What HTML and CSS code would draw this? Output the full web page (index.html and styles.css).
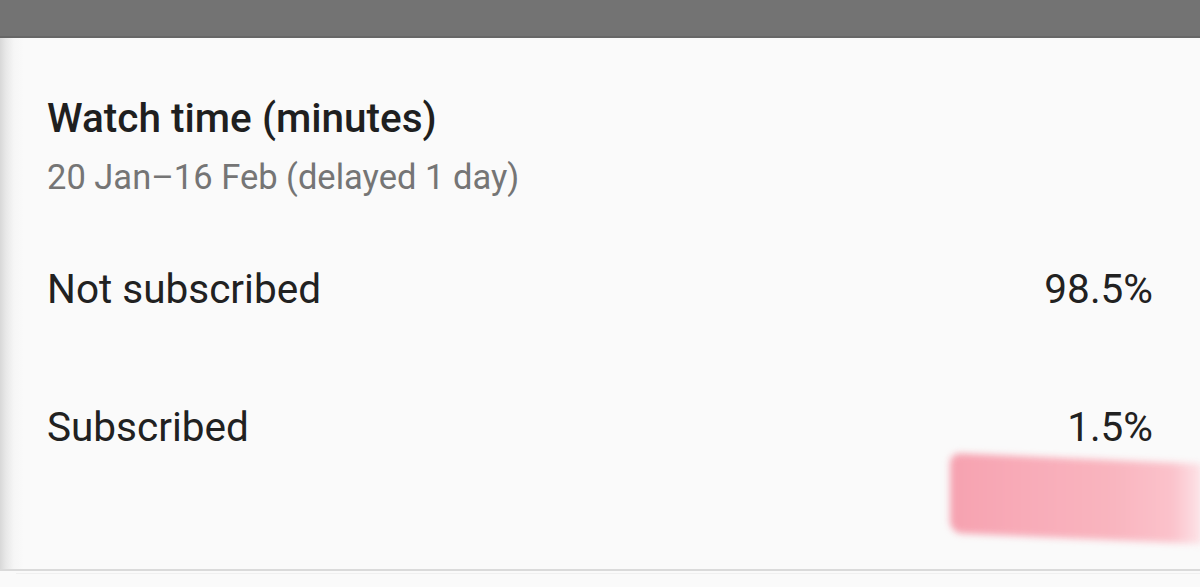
FILE: index.html
```html
<!DOCTYPE html>
<html lang="en">
<head>
<meta charset="utf-8">
<title>Watch time</title>
<link rel="stylesheet" href="styles.css">
</head>
<body>
<div class="topbar"></div>
<main class="card">
  <h1 class="title">Watch time (minutes)</h1>
  <p class="subtitle">20 Jan–16 Feb (delayed 1 day)</p>
  <div class="rows">
    <div class="row"><span class="label">Not subscribed</span><span class="value">98.5%</span></div>
    <div class="row"><span class="label">Subscribed</span><span class="value">1.5%</span></div>
  </div>
  <div class="smudge"></div>
</main>
<div class="below"></div>
</body>
</html>
```
FILE: styles.css
```css
html, body {
  margin: 0;
  padding: 0;
  height: 100%;
}
body {
  background: #fafafa;
  font-family: Roboto, "Liberation Sans", sans-serif;
  color: #212121;
  overflow: hidden;
}
.topbar {
  height: 36px;
  background: #737373;
  border-bottom: 2px solid #676767;
}
.card {
  position: relative;
  overflow: hidden;
  height: 533px;
  box-sizing: border-box;
  padding: 56px 47px 0 47px;
  background: linear-gradient(to right, #d8d8d8 0, #e8e8e8 6px, #f6f6f6 14px, #fafafa 24px);
  border-bottom: 2px solid #dadada;
}
.title {
  margin: 0;
  font-size: 40.5px;
  line-height: 48px;
  font-weight: 500;
  color: #1f1f1f;
}
.subtitle {
  margin: 15px 0 0 0;
  font-size: 34.5px;
  line-height: 40px;
  color: #757575;
}
.rows {
  margin-top: 68px;
  display: flex;
  flex-direction: column;
  gap: 90px;
}
.row {
  display: flex;
  justify-content: space-between;
  align-items: baseline;
  font-size: 40.5px;
  line-height: 48px;
  color: #212121;
}
.smudge {
  position: absolute;
  left: 950px;
  top: 415px;
  width: 252px;
  height: 80px;
  background: linear-gradient(to right, #f6a2b0 0, #f8abb8 30%, #f9b5bf 65%, #fbc2cb 88%, #fde4e8 100%);
  border-radius: 10px 0 0 12px;
  filter: blur(3.5px);
  transform: skewY(2.5deg);
  transform-origin: left top;
}
.below {
  height: 18px;
  background: #fafafa;
  border-top: 1px solid #f0f0f0;
  margin-top: 2px;
  margin-left: 16px;
}
```
